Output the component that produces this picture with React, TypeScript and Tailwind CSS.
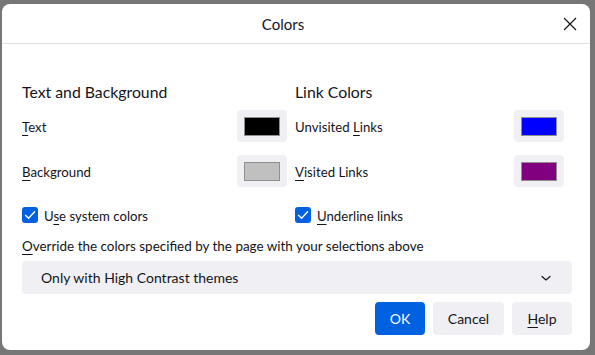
import React from "react";

const U = ({ children }: { children: React.ReactNode }) => (
  <span className="underline underline-offset-[3px] decoration-1">{children}</span>
);

function Swatch({ color }: { color: string }) {
  return (
    <div className="w-[50px] h-[32px] rounded-[4px] bg-[#f0f0f4] flex items-center justify-center">
      <div className="w-[36px] h-[19px] border border-[#8f8f8f]" style={{ backgroundColor: color }} />
    </div>
  );
}

function Check() {
  return (
    <div className="w-[16px] h-[16px] rounded-[3px] bg-[#0061e0] flex items-center justify-center">
      <svg width="12" height="12" viewBox="0 0 12 12" fill="none">
        <path d="M1.5 6.2 L4.6 9.2 L10.6 2.8" stroke="white" strokeWidth="1.4" strokeLinecap="round" strokeLinejoin="round" />
      </svg>
    </div>
  );
}

function Row({ label, color, pr }: { label: React.ReactNode; color: string; pr: string }) {
  return (
    <div className={`flex items-center justify-between h-[32px] ${pr}`}>
      <span className="pt-[3px]">{label}</span>
      <Swatch color={color} />
    </div>
  );
}

export default function App() {
  return (
    <div
      className="w-[595px] h-[355px] bg-[#777777] pt-[4px] pl-[2px] text-[#15141a] text-[13.2px]"
      style={{ fontFamily: 'Lato, "Noto Sans", sans-serif' }}
    >
      <div className="w-[588px] h-[346px] bg-white rounded-[8px] flex flex-col">
        <div className="h-[40px] border-b border-[#e0e0e6] flex items-center relative">
          <div className="flex-1 text-center text-[15px] pr-[26px] pt-[2px]">Colors</div>
          <div className="absolute right-[12px] top-[12px] w-[16px] h-[16px] flex items-center justify-center">
            <svg width="14" height="14" viewBox="0 0 14 14" fill="none">
              <path d="M1 1 L13 13 M13 1 L1 13" stroke="#15141a" strokeWidth="1.2" />
            </svg>
          </div>
        </div>
        <div className="px-[20px] flex flex-col">
          <div className="flex pt-[38px]">
            <div className="w-[273px] flex flex-col">
              <div className="text-[15.8px] leading-[20px] h-[20px] mb-[8px]">Text and Background</div>
              <div className="flex flex-col gap-[13px]">
                <Row label={<><U>T</U>ext</>} color="#000000" pr="pr-[8px]" />
                <Row label={<><U>B</U>ackground</>} color="#c0c0c0" pr="pr-[8px]" />
              </div>
              <div className="flex items-center gap-[6px] mt-[20px] h-[16px]">
                <Check />
                <span className="pt-[3px]">U<U>s</U>e system colors</span>
              </div>
            </div>
            <div className="w-[273px] flex flex-col">
              <div className="text-[15.8px] leading-[20px] h-[20px] mb-[8px]">Link Colors</div>
              <div className="flex flex-col gap-[13px]">
                <Row label={<>Unvisited <U>L</U>inks</>} color="#0000ff" pr="pr-[4px]" />
                <Row label={<><U>V</U>isited Links</>} color="#800080" pr="pr-[4px]" />
              </div>
              <div className="flex items-center gap-[6px] mt-[20px] h-[16px]">
                <Check />
                <span className="pt-[3px]"><U>U</U>nderline links</span>
              </div>
            </div>
          </div>
          <div className="mt-[12px] h-[20px] leading-[20px] pt-[1px] text-[13.45px]">
            <U>O</U>verride the colors specified by the page with your selections above
          </div>
          <div className="mt-[6px] h-[33px] w-[550px] rounded-[4px] bg-[#f0f0f4] flex items-center justify-between pl-[19px] pr-[20px] text-[14px]">
            <span>Only with High Contrast themes</span>
            <svg width="12" height="12" viewBox="0 0 12 12" fill="none">
              <path d="M2 4.5 L6 8 L10 4.5" stroke="#15141a" strokeWidth="1.2" strokeLinecap="round" strokeLinejoin="round" />
            </svg>
          </div>
          <div className="mt-[8px] flex justify-end gap-[8px] w-[550px] text-[14px]">
            <div className="w-[50px] h-[33px] rounded-[4px] bg-[#0061e0] text-white flex items-center justify-center">OK</div>
            <div className="w-[71px] h-[33px] rounded-[4px] bg-[#f0f0f4] flex items-center justify-center">Cancel</div>
            <div className="w-[60px] h-[33px] rounded-[4px] bg-[#f0f0f4] flex items-center justify-center"><span><U>H</U>elp</span></div>
          </div>
        </div>
      </div>
    </div>
  );
}
